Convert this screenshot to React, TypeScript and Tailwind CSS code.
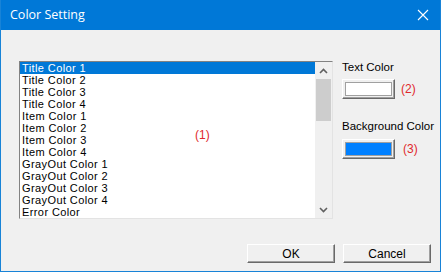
import React from 'react'

const items = [
  'Title Color 1',
  'Title Color 2',
  'Title Color 3',
  'Title Color 4',
  'Item Color 1',
  'Item Color 2',
  'Item Color 3',
  'Item Color 4',
  'GrayOut Color 1',
  'GrayOut Color 2',
  'GrayOut Color 3',
  'GrayOut Color 4',
  'Error Color',
]

const ui = { fontFamily: '"Liberation Sans", Arial, sans-serif' }

// ── Classic raised button ───────────────────────────────────────────────────
function PushButton({ label }: { label: string }) {
  return (
    <div className="flex h-[19px] w-[88px] items-center justify-center border border-t-white border-l-white border-r-[#696969] border-b-[#696969] bg-[#f0f0f0] text-[12px] text-black shadow-[inset_-1px_-1px_0_#a0a0a0]">
      {label}
    </div>
  )
}

function Swatch({ color }: { color: string }) {
  return (
    <div className="h-[20px] w-[53px] border border-t-white border-l-white border-r-[#696969] border-b-[#696969] bg-[#f0f0f0] p-[2px] shadow-[inset_-1px_-1px_0_#a0a0a0]">
      <div className="h-full w-full border border-[#a0a0a0]" style={{ background: color }} />
    </div>
  )
}

export default function App() {
  return (
    <div className="flex h-[272px] w-[441px] flex-col border-x border-b border-[#1883d7] bg-[#f0f0f0]" style={ui}>
      {/* Title bar */}
      <div className="flex h-[30px] shrink-0 items-center justify-between bg-[#0078d7] pl-[9px] pr-[10px] text-white">
        <span className="text-[12.5px]" style={{ fontFamily: '"Open Sans", "Noto Sans", sans-serif' }}>Color Setting</span>
        <svg width="12" height="12" viewBox="0 0 12 12" className="mr-[1px]">
          <path d="M1 1 L11 11 M11 1 L1 11" stroke="white" strokeWidth="1.1" />
        </svg>
      </div>

      <div className="flex pl-[18px] pt-[31px]">
        {/* List box */}
        <div className="flex h-[158px] w-[314px] border border-t-[#828282] border-l-[#828282] border-r-[#e3e3e3] border-b-[#e3e3e3] bg-white">
          <div className="flex flex-1 flex-col text-[11px] leading-[12px] tracking-[0.4px] text-black">
            {items.map((item, i) => (
              <div
                key={item}
                className={`h-[12px] pl-[2px] ${i === 0 ? 'bg-[#0078d7] text-white' : ''}`}
              >
                {item}
              </div>
            ))}
          </div>
          <div className="relative">
            <span className="absolute left-[-120px] top-[66px] text-[12px] leading-[14px] text-[#e0282c]">(1)</span>
          </div>
          {/* Scrollbar */}
          <div className="flex w-[17px] flex-col bg-[#f0f0f0]">
            <div className="flex h-[17px] items-center justify-center">
              <svg width="9" height="6" viewBox="0 0 9 6">
                <path d="M1 5 L4.5 1.5 L8 5" stroke="#606060" strokeWidth="1.6" fill="none" />
              </svg>
            </div>
            <div className="mx-[1px] h-[42px] bg-[#cdcdcd]" />
            <div className="flex-1" />
            <div className="flex h-[17px] items-center justify-center">
              <svg width="9" height="6" viewBox="0 0 9 6">
                <path d="M1 1 L4.5 4.5 L8 1" stroke="#606060" strokeWidth="1.6" fill="none" />
              </svg>
            </div>
          </div>
        </div>

        {/* Right column */}
        <div className="ml-[9px] flex flex-col text-[11.5px] text-black">
          <div className="mt-[-1px] leading-[14px]">Text Color</div>
          <div className="mt-[5px] flex items-center gap-[6px]">
            <Swatch color="#ffffff" />
            <span className="text-[12px] text-[#e0282c]">(2)</span>
          </div>
          <div className="mt-[20px] leading-[14px]">Background Color</div>
          <div className="mt-[6px] flex items-center gap-[8px]">
            <Swatch color="#0080ff" />
            <span className="text-[12px] text-[#e0282c]">(3)</span>
          </div>
        </div>
      </div>

      {/* Footer buttons */}
      <div className="mt-[25px] flex justify-end gap-[8px] pr-[9px]">
        <PushButton label="OK" />
        <PushButton label="Cancel" />
      </div>
    </div>
  )
}
